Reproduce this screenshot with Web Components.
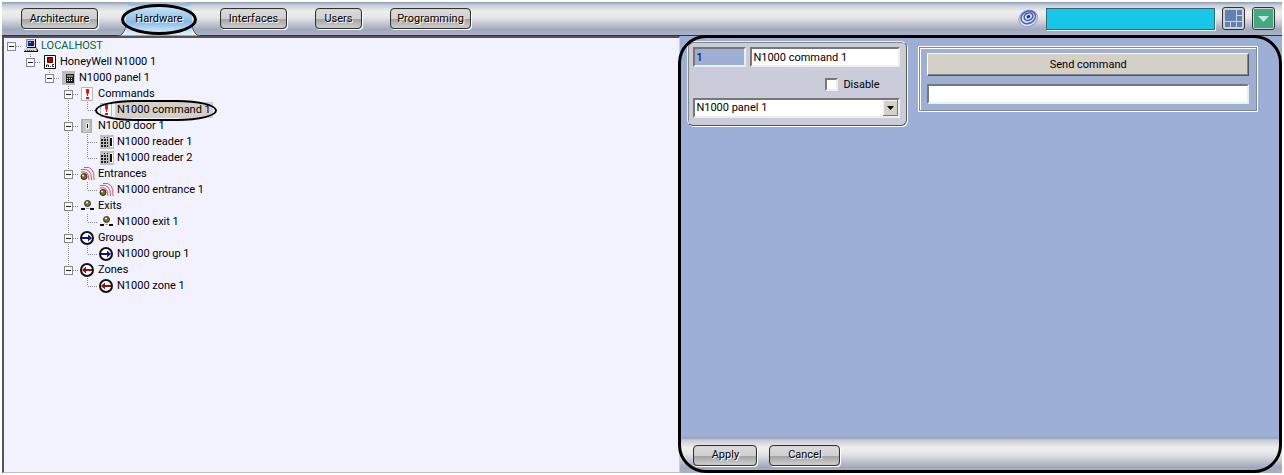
<!DOCTYPE html>
<html lang="en">
<head>
<meta charset="utf-8">
<title>Hardware settings</title>
<style>
html,
body {
  height: 100%;
}

body {
  margin: 0;
  background: white;
  color: black;
  font: 11px/16px Roboto, "DejaVu Sans Condensed", sans-serif;
}
</style>
</head>
<body>
<app-window>
  <app-toolbar slot="toolbar">
    <pill-button style="--width: 77px">Architecture</pill-button>
    <pill-button active style="--width: 66px">Hardware</pill-button>
    <pill-button style="--width: 67px">Interfaces</pill-button>
    <pill-button style="--width: 47px">Users</pill-button>
    <pill-button style="--width: 81px">Programming</pill-button>
    <status-tools slot="end"></status-tools>
  </app-toolbar>

  <object-tree slot="tree">
    <tree-node root icon="computer" style="--label: #0a6040">LOCALHOST
      <tree-node slot="children" last icon="controller">HoneyWell N1000 1
        <tree-node slot="children" last icon="panel">N1000 panel 1
          <tree-node slot="children" icon="command">Commands
            <tree-node slot="children" last leaf selected icon="command">N1000 command 1</tree-node>
          </tree-node>
          <tree-node slot="children" icon="door">N1000 door 1
            <tree-node slot="children" leaf icon="reader">N1000 reader 1</tree-node>
            <tree-node slot="children" last leaf icon="reader">N1000 reader 2</tree-node>
          </tree-node>
          <tree-node slot="children" icon="entrance">Entrances
            <tree-node slot="children" last leaf icon="entrance">N1000 entrance 1</tree-node>
          </tree-node>
          <tree-node slot="children" icon="exit">Exits
            <tree-node slot="children" last leaf icon="exit">N1000 exit 1</tree-node>
          </tree-node>
          <tree-node slot="children" icon="group">Groups
            <tree-node slot="children" last leaf icon="group">N1000 group 1</tree-node>
          </tree-node>
          <tree-node slot="children" last icon="zone">Zones
            <tree-node slot="children" last leaf icon="zone">N1000 zone 1</tree-node>
          </tree-node>
        </tree-node>
      </tree-node>
    </tree-node>
  </object-tree>

  <settings-panel slot="panel">
    <object-form></object-form>
    <command-form></command-form>
    <pill-button slot="actions" style="--width: 64px">Apply</pill-button>
    <pill-button slot="actions" style="--width: 71px">Cancel</pill-button>
  </settings-panel>
</app-window>

<script>
const ICONS = {
  computer: `
    <path d="M3 1h9v8H3z" fill="#d4d4cc"/><path d="M3.500 9V1.500H11" fill="none" stroke="#888"/>
    <path d="M12 1h1v9H4V9h8z" fill="#111"/>
    <path d="M5 3h6v5H5z" fill="#101c90"/><path d="M6 4h2v1H6z" fill="#88a8ff"/>
    <path d="M2 10h10l2 3H1z" fill="#d4d4cc"/><path d="M2 12.500h10" stroke="#555" stroke-dasharray="1 1"/>
    <path d="M1 13h13v1H1zM13 9l2 3v2h-1z" fill="#111"/>`,
  controller: `
    <path d="M2.500 1.500h11v13h-11z" fill="#fff" stroke="#111"/>
    <path d="M5 3h6v5H5z" fill="#a01010"/><path d="M5.500 3.500h5v5h-5z" fill="none" stroke="#500"/>
    <path d="M4.500 13v-2h2v2M8 12.500h1M12 10.500h-1.500v2H12" fill="none" stroke="#222"/>`,
  panel: `
    <path d="M1 1h13v14H1z" fill="#bcbcbc"/>
    <path d="M5 4h8v9H5z" fill="#222"/><path d="M6 5h6v2H6z" fill="#789078"/>
    <path d="M6 8.500h6M6 10.500h6" stroke="#ddd" stroke-dasharray="1 1"/>`,
  command: `
    <path d="M1.500 1.500h11v13h-11z" fill="#fff" stroke="#b4b4bc"/>
    <path d="M6 3h3l-1 7H7z" fill="#d81818"/><path d="M6 3h3v4H6zM6 11h3v2H6z" fill="#d81818"/>`,
  door: `
    <path d="M1 1h11v14H1z" fill="#b0b0b0"/><path d="M3 2h7v12H3z" fill="#c8c8c8"/>
    <path d="M6 5h3v6H6z" fill="#f4f4f4"/><path d="M7 6h1v4H7z" fill="#111"/>`,
  reader: `
    <path d="M1 1h14v14H1z" fill="#c0c0c0"/>
    <path d="M2 5h2v2H2zM5 5h2v2H5zM8 5h1v2H8zM2 8h2v2H2zM5 8h2v2H5zM8 8h1v2H8zM2 11h2v2H2zM5 11h2v2H5zM8 11h1v2H8zM5 3h1v1H5zM8 3h1v1H8z" fill="#222"/>
    <path d="M11 3h3v10h-3z" fill="#fff"/><path d="M11 4h2v8h-2z" fill="#111"/>`,
  entrance: `
    <g fill="none" stroke="#d85060"><path d="M1 6q8-2 8 8M1 3.500q11-2 10.500 10.500M4 1.500q11-2 10 12.500"/></g>
    <circle cx="4" cy="10.500" r="3" fill="#777020" stroke="#222"/><circle cx="3" cy="9.500" r="1" fill="#ffffb0"/>`,
  exit: `
    <circle cx="7.500" cy="5.500" r="3" fill="#777020" stroke="#333"/><circle cx="7" cy="4.500" r="1" fill="#ffffb0"/>
    <path d="M1 10h4v2H1zM10 10h4v2h-4z" fill="#111"/><path d="M6 10h3v1H6z" fill="#aaa"/>`,
  group: `
    <circle cx="7" cy="8" r="6" fill="#fff" stroke="#111" stroke-width="2"/>
    <path d="M2 8h7" stroke="#101880" stroke-width="2"/><path d="M8 4.500v7L12 8z" fill="#101880"/>`,
  zone: `
    <circle cx="7" cy="8" r="6" fill="#fff" stroke="#111" stroke-width="2"/>
    <path d="M5 8h7" stroke="#881010" stroke-width="2"/><path d="M6 4.500v7L2 8z" fill="#881010"/>`,
};

/* Shared by every bar: a brushed metal gradient */
const METAL = 'linear-gradient(#8f9cb4, #c9ced8 10%, #efefef 30%, #e4e4e6 48%, #bfc3cf 68%, #a2a8bc 84%, #a9b3c7)';

/**
 * @param {string} name
 * @param {string} html
 * @param {(root: ShadowRoot, host: HTMLElement) => void} [setup]
 */
function define(name, html, setup) {
  const template = document.createElement('template');
  template.innerHTML = html;

  window.customElements.define(name, class extends HTMLElement {
    constructor() {
      super();
      const root = this.attachShadow({ mode: 'open' });
      root.appendChild(template.content.cloneNode(true));
      if (setup) setup(root, this);
    }
  });
}

define('app-window', /* html */ `
<style>
:host {
  display: flex;
  flex-direction: column;
  min-height: 100%;
  padding: 2px;
  box-sizing: border-box;
}

main {
  flex: 1;
  display: grid;
  grid-template-columns: 53fr 47fr;
}
</style>
<slot name="toolbar"></slot>
<main>
  <slot name="tree"></slot>
  <slot name="panel"></slot>
</main>
`);

define('app-toolbar', /* html */ `
<style>
:host {
  display: flex;
  align-items: center;
  justify-content: space-between;
  height: 33px;
  padding: 0 7px 0 19px;
  background: ${METAL};
  border-bottom: 1px solid #333;
}

nav {
  display: flex;
  align-items: center;
  gap: 28px;
}
</style>
<nav aria-label="Sections"><slot></slot></nav>
<slot name="end"></slot>
`);

define('pill-button', /* html */ `
<style>
:host {
  display: block;
  position: relative;
}

button {
  display: block;
  min-width: var(--width);
  height: 21px;
  padding: 0;
  border: 1px solid #333;
  border-radius: 4px;
  background: linear-gradient(#dcdcdc, #d0d0d0 50%, #a4a4a4 55%, #d0d0d0);
  box-shadow: 1px 1px 0 white, inset 0 0 1px #777;
  color: inherit;
  font: inherit;
  text-shadow: 1px 1px 0 white;
  cursor: pointer;
}

.flare,
.ring {
  display: none;
}

:host([active]) {
  z-index: 0;
}

:host([active]) button {
  height: 33px;
  border: 0;
  border-radius: 8px 8px 0 0;
  background: linear-gradient(#a9b5cb 3px, #c4e4f8 5px, #a6cdf0 40%, #8cb8e6 60%, #c4e4fa 88%, #e6eefa);
  box-shadow: none;
}

:host([active]) .flare {
  display: block;
  position: absolute;
  left: -8px;
  bottom: -1px;
  width: calc(100% + 16px);
  height: 10px;
  z-index: -1;
}

:host([active]) .ring {
  display: block;
  position: absolute;
  inset: 2px -5px 0;
  border: 3px solid black;
  border-radius: 50%;
  pointer-events: none;
}
</style>
<svg class="flare" viewBox="0 0 82 10" preserveAspectRatio="none" aria-hidden="true">
  <path d="M0 10q6-1 8-10h66q2 9 8 10z" fill="#f0f0fc" stroke="#555"/>
</svg>
<button type="button"><slot></slot></button>
<span class="ring"></span>
`);

define('status-tools', /* html */ `
<style>
:host {
  display: flex;
  align-items: center;
  gap: 7px;
}

input {
  width: 169px;
  height: 22px;
  box-sizing: border-box;
  padding: 0 4px;
  border: 1px solid #386878;
  border-radius: 0;
  background: #18c6e8;
  box-shadow: 1px 1px 0 #eee;
  font: inherit;
}

button {
  width: 23px;
  height: 23px;
  padding: 0;
  border: 1px solid #333;
  border-radius: 3px;
  background: #ccd2dc;
  line-height: 0;
}

svg {
  display: block;
}
</style>
<svg width="21" height="21" viewBox="0 0 21 21" aria-hidden="true">
  <g transform="rotate(-25 10 10)" fill="none">
    <ellipse cx="10" cy="10.500" rx="9.500" ry="8" fill="#dde2f4" stroke="#8c9cd4"/>
    <ellipse cx="10.500" cy="9.500" rx="7.500" ry="6" stroke="#4a5eb0" stroke-width="1.500"/>
    <ellipse cx="11" cy="9" rx="4.500" ry="3.500" stroke="#4458b0" stroke-width="1.500"/>
    <ellipse cx="11" cy="9" rx="2" ry="1.500" fill="#26348c"/>
  </g>
</svg>
<input type="text" aria-label="Status">
<button type="button" aria-label="Layout">
  <svg width="21" height="21" viewBox="0 0 21 21"><path d="M2 2h11v11H2zM14 2h5v5h-5zM14 8h5v5h-5zM2 14h5v5H2zM8 14h5v5H8zM14 14h5v5h-5z" fill="#6480b0"/></svg>
</button>
<button type="button" aria-label="Menu">
  <svg width="21" height="21" viewBox="0 0 21 21"><path d="M1 1h19v19H1z" fill="#42a884"/><path d="M5 8h11l-5.500 6z" fill="#c4e4dc"/></svg>
</button>
`);

define('object-tree', /* html */ `
<style>
:host {
  display: block;
  border: solid;
  border-width: 2px 1px 1px 2px;
  border-color: #555 #d4d0c8 #c4c0b8 #555;
  background: #f2f2ff;
}
</style>
<slot></slot>
`);

define('tree-node', /* html */ `
<style>
:host {
  display: block;
  background: repeating-linear-gradient(#888 0 1px, transparent 1px 2px) 7px 0 / 1px 100% no-repeat;
}

:host([last]) {
  background-size: 1px 8px;
}

:host([root]) {
  background: none;
}

.row {
  display: flex;
  align-items: center;
  position: relative;
  height: 16px;
  gap: 2px;
}

.gutter {
  width: 17px;
  height: 16px;
  display: flex;
  align-items: center;
  padding-left: 3px;
  box-sizing: border-box;
  background: repeating-linear-gradient(90deg, #888 0 1px, transparent 1px 2px) 8px 8px / 11px 1px no-repeat;
}

.toggle {
  width: 9px;
  height: 9px;
  padding: 0;
  border: 1px solid #888;
  background: linear-gradient(#222, #222) center / 5px 1px no-repeat #f8f8ff;
}

:host([leaf]) .toggle,
:host([leaf]) .children,
.ring {
  display: none;
}

.label {
  color: var(--label, black);
  white-space: nowrap;
}

.children {
  display: block;
  padding-left: 19px;
  --label: black;
}

:host([selected]) .label {
  margin-left: -2px;
  padding: 0 2px;
  background: #d4d0c8;
}

:host([selected]) .ring {
  display: block;
  position: absolute;
  left: 15px;
  top: -2px;
  width: 122px;
  height: 21px;
  box-sizing: border-box;
  border: 2px solid black;
  border-radius: 40px / 50%;
}

svg {
  display: block;
}
</style>
<div class="row">
  <span class="gutter"><button class="toggle" type="button" aria-label="Collapse"></button></span>
  <svg width="16" height="16" viewBox="0 0 16 16" aria-hidden="true"></svg>
  <span class="label"><slot></slot></span>
  <span class="ring"></span>
</div>
<div class="children"><slot name="children"></slot></div>
`, (root, host) => {
  root.querySelector('svg').innerHTML = ICONS[host.getAttribute('icon')];
});

define('settings-panel', /* html */ `
<style>
:host {
  display: flex;
  flex-direction: column;
  position: relative;
  background: #9dafd4;
}

.forms {
  flex: 1;
  display: flex;
  align-items: flex-start;
  gap: 12px;
  padding: 5px 25px 5px 7px;
}

footer {
  display: flex;
  align-items: center;
  gap: 12px;
  height: 36px;
  padding-left: 13px;
  background: ${METAL};
}

.outline {
  position: absolute;
  inset: -1px 0 0 -2px;
  border: 3px solid black;
  border-radius: 28px;
  pointer-events: none;
}
</style>
<div class="forms"><slot></slot></div>
<footer><slot name="actions"></slot></footer>
<span class="outline"></span>
`);

const FIELD = /* css */ `
input[type="text"],
select {
  width: 100%;
  min-width: 0;
  height: 20px;
  box-sizing: border-box;
  padding: 0 1px;
  border: 2px solid;
  border-color: #777 #eee #eee #777;
  border-radius: 0;
  background: white;
  color: black;
  font: inherit;
}
`;

define('object-form', /* html */ `
<style>
${FIELD}
:host {
  flex: 0 0 auto;
  display: grid;
  gap: 7px;
  width: 220px;
  padding: 5px 6px 7px 5px;
  box-sizing: border-box;
  border: 1px solid #555;
  border-color: #eee #555 #555 #eee;
  border-radius: 6px;
  background: #cacdd9;
  box-shadow: 1px 1px 0 white, inset 1px 1px 0 #888;
}

.names {
  display: grid;
  grid-template-columns: 53px 1fr;
  gap: 4px;
}

input.id[type="text"] {
  background: #9dafd4;
}

.disable {
  display: flex;
  align-items: center;
  gap: 5px;
  height: 13px;
  padding: 4px 0 0 132px;
}

.disable input {
  appearance: none;
  width: 13px;
  height: 13px;
  margin: 0;
  border: 2px solid;
  border-color: #777 #eee #eee #777;
  background: white;
}

.pick {
  display: grid;
  align-items: center;
}

.pick > * {
  grid-area: 1 / 1;
}

select {
  appearance: none;
}

svg {
  justify-self: end;
  margin-right: 2px;
  pointer-events: none;
}
</style>
<div class="names">
  <input class="id" type="text" value="1" aria-label="Number">
  <input type="text" value="N1000 command 1" aria-label="Name">
</div>
<label class="disable"><input type="checkbox"> Disable</label>
<div class="pick">
  <select aria-label="Panel"><option>N1000 panel 1</option></select>
  <svg width="15" height="16" viewBox="0 0 15 16" aria-hidden="true">
    <path d="M0 0h15v16H0z" fill="#d4d0c8"/>
    <path d="M.5 15.500V.5h14" fill="none" stroke="#f4f4f0"/>
    <path d="M0 15.500h14.500V0" fill="none" stroke="#777"/>
    <path d="M4 6h7l-3.500 4z"/>
  </svg>
</div>
`);

define('command-form', /* html */ `
<style>
${FIELD}
:host {
  flex: 1;
  display: grid;
  gap: 8px;
  margin-top: 6px;
  padding: 5px 7px 6px;
  border: 1px solid #808898;
  outline: 1px solid white;
  box-shadow: inset 1px 1px 0 white;
}

button {
  height: 23px;
  padding: 0;
  border: 1px solid;
  border-color: white #555 #555 white;
  background: #d4d0c8;
  box-shadow: inset -1px -1px 0 #888;
  color: black;
  font: inherit;
}
</style>
<button type="button">Send command</button>
<input type="text" aria-label="Command">
`);
</script>
</body>
</html>
